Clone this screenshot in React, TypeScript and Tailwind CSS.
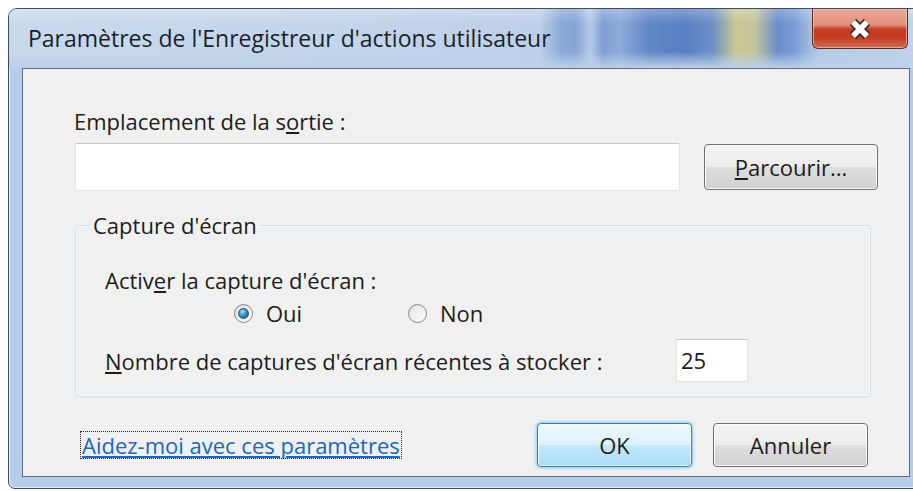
import React from "react";

const font = "font-['Open_Sans','Noto_Sans',sans-serif]";

const Radio = ({ checked, label }: { checked: boolean; label: string }) => (
  <div className="flex items-center gap-[13px]">
    <div className="w-[19px] h-[19px] rounded-full border border-[#8d8d8d] bg-[linear-gradient(135deg,#d2d2d2,#ffffff)] flex items-center justify-center">
      <div className="w-[15px] h-[15px] rounded-full bg-[linear-gradient(135deg,#e6e6e6,#fbfbfb)] flex items-center justify-center">
        {checked && (
          <div className="w-[11px] h-[11px] rounded-full border border-[#1f4f75] bg-[radial-gradient(circle_at_35%_30%,#a6e0fa_0%,#3a93c6_45%,#13507c_100%)]" />
        )}
      </div>
    </div>
    <span className="text-[22px] leading-[24px] text-[#1c1c1c]">{label}</span>
  </div>
);

const Button = ({
  children,
  primary,
  className = "",
}: {
  children: React.ReactNode;
  primary?: boolean;
  className?: string;
}) => (
  <button
    className={
      primary
        ? `rounded-[4px] border border-[#3c7fb1] bg-[linear-gradient(#edf8fe_0%,#dcf1fc_50%,#c4e8fc_51%,#a9daf6_100%)] shadow-[0_0_3px_1px_#7ccaf0,inset_0_0_0_1px_#ffffffaa] text-[22px] text-[#1c1c1c] flex items-center justify-center ${className}`
        : `rounded-[4px] border border-[#707070] bg-[linear-gradient(#f3f3f3_0%,#ececec_50%,#dedede_51%,#d0d0d0_100%)] shadow-[inset_0_0_0_1px_#fbfbfb] text-[22px] text-[#1c1c1c] flex items-center justify-center ${className}`
    }
  >
    {children}
  </button>
);

export default function App() {
  return (
    <div className={`w-[913px] h-[491px] bg-white overflow-hidden pt-[8px] pl-[8px] ${font}`}>
      {/* window frame */}
      <div className="w-[916px] h-[481px] rounded-t-[9px] rounded-b-[7px] border border-[#3f4d5f] bg-[#b4cdea] flex flex-col shadow-[inset_0_0_0_1px_#e2ecf8] overflow-hidden">
        {/* title bar with the glass tint */}
        <div className="h-[59px] flex items-start pl-[19px] pr-[15px] bg-[linear-gradient(180deg,#ffffff40_0%,#ffffff00_25%,#ffffff00_72%,#bcd1e9_100%),linear-gradient(90deg,#c9d9ec_0%,#c3d5ea_35%,#bdd0e9_58%,#8aa8d7_60.5%,#86a4d5_62%,#b6cbe7_63.6%,#7f9fd3_65%,#8eabd9_66.8%,#6287c7_70%,#5a80c4_74%,#6d8fc6_77%,#c9c893_79.5%,#c2c59c_81.6%,#6a8dcb_84.1%,#7c9cd4_86%,#b4cbe7_88.5%,#c0d4ea_100%)]">
          <span className="mt-[18px] text-[23px] leading-[23px] text-[#1b1f2a]">
            Paramètres de l'Enregistreur d'actions utilisateur
          </span>
          <div className="ml-auto w-[96px] h-[40px] rounded-b-[6px] border border-t-0 border-[#5e2a22] bg-[linear-gradient(#eba99b_0%,#e1917e_40%,#c43e22_52%,#c23a20_72%,#d56a50_100%)] shadow-[inset_0_0_0_1px_#f3c6b9aa] flex items-center justify-center">
            <svg width="30" height="24" viewBox="0 0 30 24">
              <path d="M8 5 L22 19 M22 5 L8 19" stroke="#4a2a26" strokeWidth="9" />
              <path d="M8 5 L22 19 M22 5 L8 19" stroke="#ffffff" strokeWidth="5.5" />
            </svg>
          </div>
        </div>

        {/* client area */}
        <div className="mx-[13px] h-[409px] border border-[#5d6d82] bg-[#f0f0f0] flex flex-col text-[#1c1c1c]">
          <div className="pl-[51px] pt-[40px] text-[22px] leading-[24px]">
            Emplacement de la s<u>o</u>rtie :
          </div>
          <div className="pl-[52px] mt-[10px] flex items-center gap-[24px]">
            <div className="w-[605px] h-[48px] bg-white border border-[#e3e3e3] border-t-[#c6c6c6] rounded-[2px]" />
            <Button className="w-[174px] h-[46px]">
              <span>
                <u>P</u>arcourir...
              </span>
            </Button>
          </div>

          <fieldset className="ml-[52px] mt-[22px] w-[796px] border border-[#d5dfe5] rounded-[3px] px-[29px] pb-[14px] shadow-[inset_0_0_0_1px_#ffffff80]">
            <legend className="ml-[-15px] px-[3px] text-[22px] leading-[24px]">Capture d'écran</legend>
            <div className="mt-[31px] text-[22px] leading-[24px]">
              Activ<u>e</u>r la capture d'écran :
            </div>
            <div className="mt-[9px] flex items-center">
              <div className="ml-[129px] w-[174px]">
                <Radio checked label="Oui" />
              </div>
              <Radio checked={false} label="Non" />
            </div>
            <div className="mt-[14px] flex items-center">
              <span className="text-[22px] leading-[24px]">
                <u>N</u>ombre de captures d'écran récentes à stocker :
              </span>
              <div className="ml-auto mr-[93px] w-[72px] h-[43px] bg-white border border-[#e3e3e3] border-t-[#c6c6c6] flex items-center pl-[4px] text-[22px]">
                25
              </div>
            </div>
          </fieldset>

          <div className="mt-[26px] pl-[58px] flex items-center">
            <a className="text-[22px] leading-[26px] text-[#1a68c2] underline outline-1 outline-dotted outline-[#222] px-[1px]">
              Aidez-moi avec ces paramètres
            </a>
            <Button primary className="ml-auto w-[155px] h-[44px]">
              OK
            </Button>
            <Button className="ml-[21px] mr-[41px] w-[155px] h-[44px]">Annuler</Button>
          </div>
        </div>
      </div>
    </div>
  );
}
